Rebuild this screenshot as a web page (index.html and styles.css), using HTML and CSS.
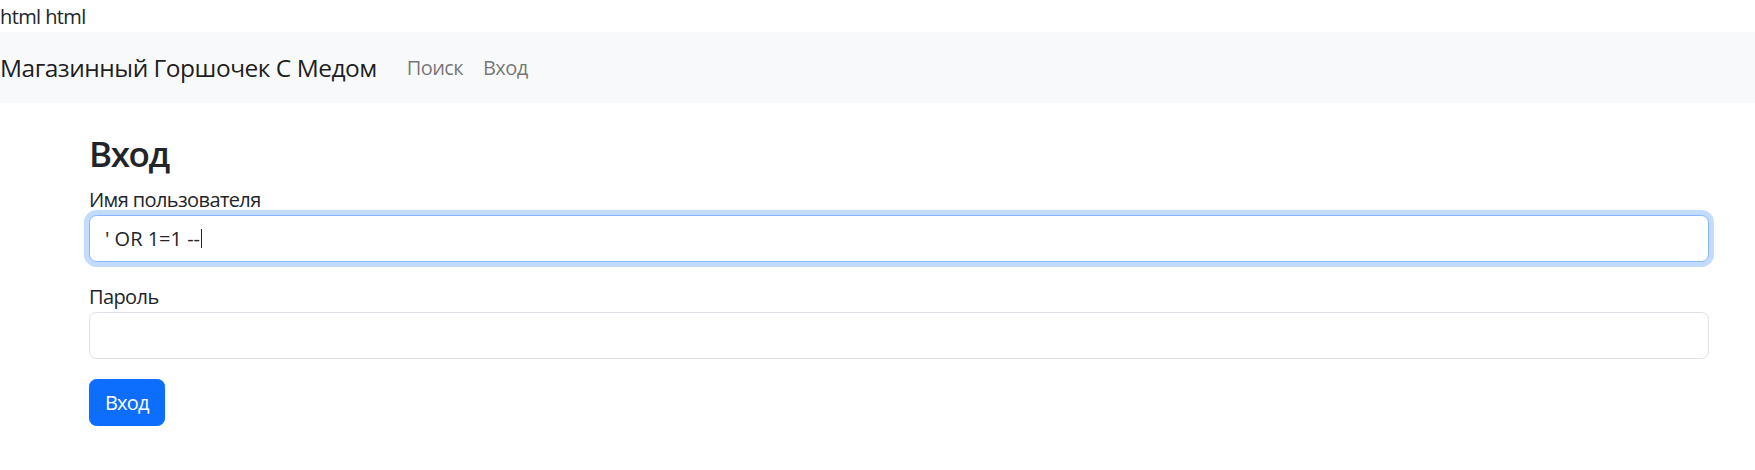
FILE: index.html
```html
<!DOCTYPE html>
<html lang="ru">
<head>
<meta charset="utf-8">
<title>Вход</title>
<link rel="stylesheet" href="styles.css">
</head>
<body>
<div class="stray">html html</div>
<nav class="navbar">
  <a class="brand" href="#">Магазинный Горшочек С Медом</a>
  <ul class="nav">
    <li><a class="nav-link" href="#">Поиск</a></li>
    <li><a class="nav-link" href="#">Вход</a></li>
  </ul>
</nav>
<main class="container">
  <h3 class="title">Вход</h3>
  <form class="login">
    <div class="group">
      <label class="label">Имя пользователя</label>
      <div class="field is-focused" role="textbox"><span class="value">' OR 1=1 --</span><span class="caret"></span></div>
    </div>
    <div class="group">
      <label class="label">Пароль</label>
      <div class="field" role="textbox"></div>
    </div>
    <button class="btn" type="button">Вход</button>
  </form>
</main>
</body>
</html>
```
FILE: styles.css
```css
* { box-sizing: border-box; }
html, body { margin: 0; padding: 0; background: #fff; }
body {
  font-family: "Open Sans", "Noto Sans", sans-serif;
  font-size: 20px;
  line-height: 1.5;
  letter-spacing: -0.03em;
  color: #212529;
}
.stray {
  height: 32px;
  line-height: 30px;
  padding-top: 2px;
}
.navbar {
  height: 71px;
  background: #f8f9fa;
  display: flex;
  align-items: center;
}
.brand {
  font-size: 24.5px;
  line-height: 37.5px;
  letter-spacing: -0.02em;
  color: rgba(0,0,0,.9);
  text-decoration: none;
  margin-right: 20px;
  white-space: nowrap;
}
.nav {
  list-style: none;
  margin: 0;
  padding: 0;
  display: flex;
}
.nav-link {
  display: block;
  padding: 10px;
  color: rgba(0,0,0,.55);
  text-decoration: none;
}
.container {
  margin-left: 89px;
  width: 1620px;
  padding-top: 30px;
}
.title {
  margin: 0 0 10px;
  font-size: 35px;
  line-height: 42px;
  font-weight: 600;
  letter-spacing: -0.04em;
  color: #212529;
}
.login { margin: 0; }
.group { margin-bottom: 20px; }
.label {
  display: block;
  line-height: 30px;
}
.field {
  height: 47px;
  border: 1px solid #dee2e6;
  border-radius: 7.5px;
  padding: 0 15px;
  display: flex;
  align-items: center;
  background: #fff;
  color: #212529;
}
.field.is-focused {
  border-color: #86b7fe;
  box-shadow: 0 0 0 5px rgba(13,110,253,.25);
}
.value { white-space: pre; letter-spacing: 0; }
.caret {
  display: inline-block;
  width: 1px;
  height: 19px;
  background: #212529;
  margin-left: 1px;
}
.btn {
  height: 47px;
  padding: 0 15px;
  border: 1px solid #0d6efd;
  border-radius: 7.5px;
  background: #0d6efd;
  color: #fff;
  font-family: inherit;
  font-size: 20px;
  line-height: 30px;
  letter-spacing: -0.04em;
}
```
